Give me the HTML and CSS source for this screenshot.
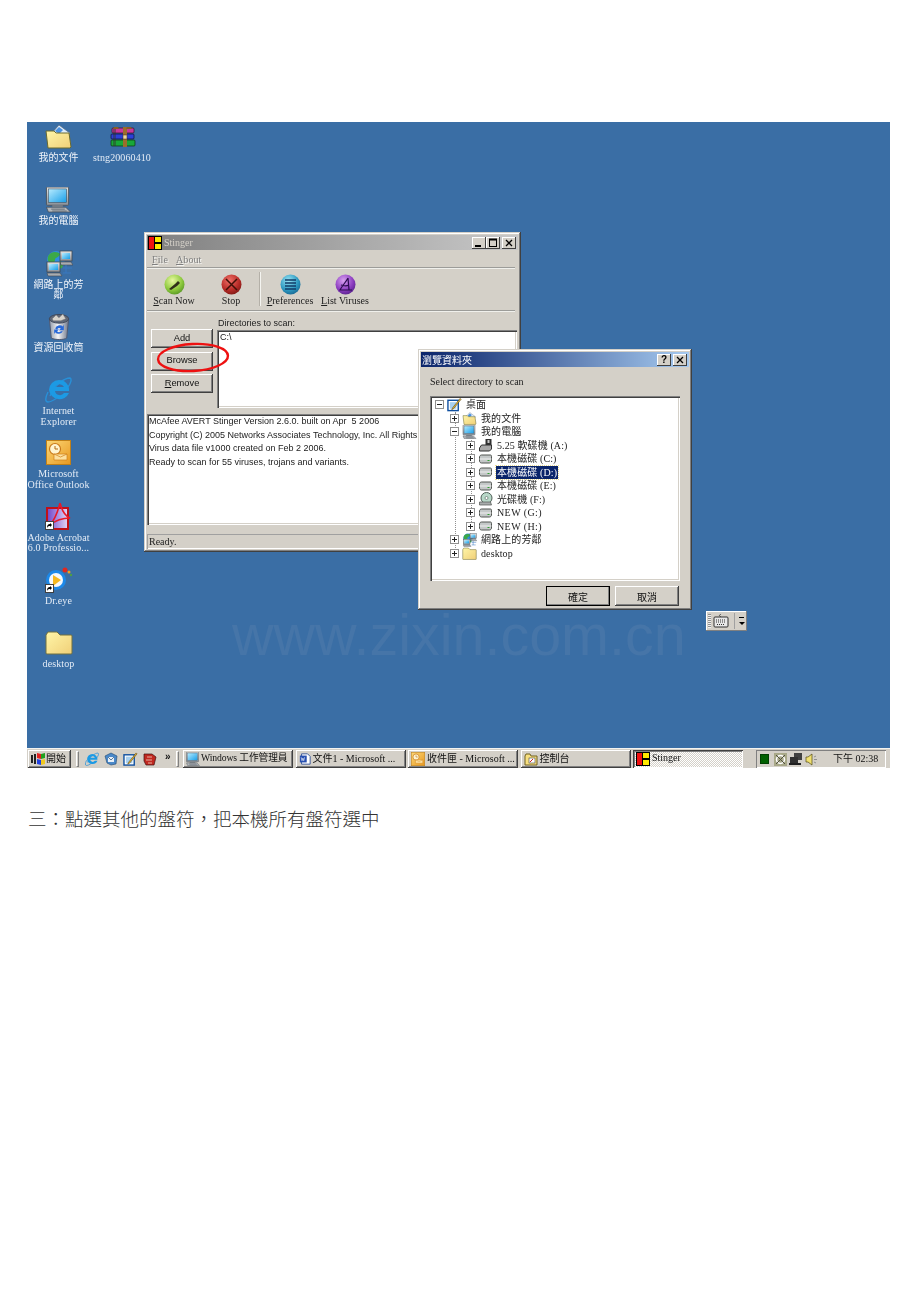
FILE: index.html
```html
<!DOCTYPE html>
<html lang="zh-Hant">
<head>
    <meta charset="UTF-8">
    <title>Stinger</title>
    <link rel="stylesheet" href="styles.css">
</head>
<body>
    <svg class="sprites" aria-hidden="true">
        <defs>
            <linearGradient id="folderFill" x1="0" y1="0" x2="1" y2="1"><stop offset="0" stop-color="#fff6a8"/><stop offset="1" stop-color="#f0cf78"/></linearGradient>
            <linearGradient id="screenFill" x1="0" y1="0" x2="1" y2="1"><stop offset="0" stop-color="#b8ecff"/><stop offset="1" stop-color="#189ee8"/></linearGradient>
            <linearGradient id="caseFill" x1="0" y1="0" x2="0" y2="1"><stop offset="0" stop-color="#e6e6e6"/><stop offset="1" stop-color="#8a8f96"/></linearGradient>
            <linearGradient id="binFill" x1="0" y1="0" x2="1" y2="0"><stop offset="0" stop-color="#8f98a8"/><stop offset=".45" stop-color="#f4f4f6"/><stop offset="1" stop-color="#6d7588"/></linearGradient>
            <linearGradient id="acroFill" x1="0" y1="0" x2="1" y2="0"><stop offset="0" stop-color="#6f43c8"/><stop offset="1" stop-color="#e4d8f8"/></linearGradient>
            <linearGradient id="outFill" x1="0" y1="0" x2="1" y2="1"><stop offset="0" stop-color="#fcd878"/><stop offset="1" stop-color="#e89820"/></linearGradient>
            <radialGradient id="orbGreen" cx=".4" cy=".3" r=".8"><stop offset="0" stop-color="#e8f8a0"/><stop offset=".6" stop-color="#8cc83c"/><stop offset="1" stop-color="#4c8c20"/></radialGradient>
            <radialGradient id="orbRed" cx=".4" cy=".3" r=".8"><stop offset="0" stop-color="#f07068"/><stop offset=".6" stop-color="#b82c28"/><stop offset="1" stop-color="#701410"/></radialGradient>
            <radialGradient id="orbBlue" cx=".4" cy=".3" r=".8"><stop offset="0" stop-color="#98e4f4"/><stop offset=".6" stop-color="#2c98c0"/><stop offset="1" stop-color="#145c88"/></radialGradient>
            <radialGradient id="orbPurple" cx=".4" cy=".3" r=".8"><stop offset="0" stop-color="#d8a0f0"/><stop offset=".6" stop-color="#8c3cc0"/><stop offset="1" stop-color="#4c1c80"/></radialGradient>

            <symbol id="i-docs" viewBox="0 0 27 25">
                <path d="M7 9 14 1l8 6 3 2-2 3H9z" fill="#dfeefc" stroke="#5a6a80" stroke-width=".7"/>
                <path d="m14 3 4 3-4 4-4-3z" fill="#4a90e0"/>
                <path d="M1 7h8l2 2h13l2 14-1 1H3z" fill="url(#folderFill)" stroke="#6a6a30"/>
            </symbol>
            <symbol id="i-rar" viewBox="0 0 27 20">
                <rect x="3" y="1" width="22" height="5" rx="1" fill="#c8389c" stroke="#301028" stroke-width=".7"/>
                <rect x="2" y="7" width="23" height="5" rx="1" fill="#2c40d8" stroke="#101030" stroke-width=".7"/>
                <rect x="2" y="13" width="24" height="6" rx="1" fill="#18a838" stroke="#103010" stroke-width=".7"/>
                <path d="M4 2h3v17H4z" fill="#303030" opacity=".45"/>
                <rect x="14" y="0" width="4" height="20" fill="#9c6c2c"/>
                <path d="M5 0h4l1 2H4zM22 0h-4l-1 2h6z" fill="#8c5c24"/>
                <rect x="14" y="8" width="4" height="4" fill="#e8d8a0" stroke="#402810" stroke-width=".5"/>
            </symbol>
            <symbol id="i-pc" viewBox="0 0 27 27">
                <rect x="1" y="0" width="23" height="19" rx="1" fill="url(#caseFill)" stroke="#505860"/>
                <rect x="3" y="2" width="19" height="14" fill="url(#screenFill)" stroke="#405060" stroke-width=".6"/>
                <path d="M7 19h11v2H7z" fill="#808890"/>
                <path d="M1 21h20l5 5H3z" fill="#b4b8bc" stroke="#485058" stroke-width=".8"/>
                <path d="M6 23h14M7 25h15" stroke="#606870"/>
            </symbol>
            <symbol id="i-net" viewBox="0 0 28 27">
                <circle cx="11" cy="10" r="9" fill="#2e8ce0"/>
                <path d="M6 3c3-2 8-1 9 1-1 4-5 3-5 6s-4 4-7 1c-1-3 0-6 3-8zM15 11l4 2-2 5-3 1z" fill="#3ca848"/>
                <rect x="15" y="1" width="12" height="10" fill="url(#caseFill)" stroke="#404850" stroke-width=".8"/>
                <rect x="17" y="3" width="8" height="6" fill="url(#screenFill)"/>
                <path d="M15 12h11l2 3H16z" fill="#a8acb0" stroke="#404850" stroke-width=".6"/>
                <rect x="2" y="12" width="13" height="10" fill="url(#caseFill)" stroke="#404850" stroke-width=".8"/>
                <rect x="4" y="14" width="9" height="6" fill="url(#screenFill)"/>
                <path d="M2 23h13l2 3H3z" fill="#a8acb0" stroke="#404850" stroke-width=".6"/>
                <path d="M18 18h9M21 15v8M18 23h8" stroke="#3878c0"/>
            </symbol>
            <symbol id="i-bin" viewBox="0 0 24 28">
                <path d="M2 6l2 20c4 2 13 2 16 0l2-20z" fill="url(#binFill)" stroke="#505870"/>
                <ellipse cx="12" cy="6" rx="10" ry="4.500" fill="#606878" stroke="#404858"/>
                <path d="M5 6l4-4 3 3 4-4 3 5-5 2-8 0z" fill="#d8d4cc" stroke="#707070" stroke-width=".5"/>
                <path d="M8 16a5 5 0 0 1 8-2l1-2v6h-5l2-2a3 3 0 0 0-4 1zM16 19a5 5 0 0 1-8 1l-1 2v-5h5l-2 2a3 3 0 0 0 4 0z" fill="#2868d8"/>
            </symbol>
            <symbol id="i-ie" viewBox="0 0 27 27">
                <path d="M5 20C10 8 20 2 25 2c2 1 1 5-2 9" fill="none" stroke="#2890d8" stroke-width="1.400"/>
                <path d="M14 4a10 10 0 0 1 10 11H10a5 5 0 0 0 9 2h5a10.500 10.500 0 0 1-20-3A10 10 0 0 1 14 4zm-4 7h9a5 5 0 0 0-9 0z" fill="#1c9ae4" fill-rule="evenodd"/>
                <path d="M3 16c-3 6-3 10 0 10 3 0 6-2 9-4" fill="none" stroke="#2890d8" stroke-width="1.400"/>
            </symbol>
            <symbol id="i-outlook" viewBox="0 0 25 25">
                <rect x=".5" y=".5" width="24" height="24" fill="url(#outFill)" stroke="#c08018"/>
                <circle cx="9" cy="9" r="5.500" fill="#fff4d0" stroke="#c87818" stroke-width="1.200"/>
                <path d="M9 6v3h3" fill="none" stroke="#b06810"/>
                <path d="M8 14h13v6H8z" fill="#fce0a0" stroke="#d08018" stroke-width=".7"/>
                <path d="M8 14l6.500 3 6.500-3" fill="none" stroke="#d08018" stroke-width=".7"/>
            </symbol>
            <symbol id="i-acro" viewBox="0 0 27 27">
                <rect x="2" y="5" width="21" height="21" fill="url(#acroFill)" stroke="#c01018" stroke-width="2"/>
                <path d="M15 0c-2 8-4 15-10 22 6-5 12-7 20-7-5-2-8-7-10-15z" fill="none" stroke="#e81828" stroke-width="1.600"/>
            </symbol>
            <symbol id="i-dreye" viewBox="0 0 28 25">
                <circle cx="11" cy="13" r="10" fill="#1c88e8"/>
                <circle cx="11" cy="13" r="7" fill="#f4f8fc"/>
                <path d="M8 8l8 5-8 6z" fill="#f4b820"/>
                <circle cx="20" cy="3" r="2.500" fill="#e02820"/>
                <circle cx="24" cy="5" r="1.500" fill="#f0a020"/>
                <circle cx="26" cy="8" r="1.200" fill="#50a040"/>
            </symbol>
            <symbol id="i-folder" viewBox="0 0 28 25">
                <path d="M1 5l2-3h9l3 3h11a1 1 0 0 1 1 1v17a1 1 0 0 1-1 1H2a1 1 0 0 1-1-1z" fill="url(#folderFill)" stroke="#707040"/>
            </symbol>
            <symbol id="i-link" viewBox="0 0 9 9">
                <rect x=".5" y=".5" width="8" height="8" fill="#fff" stroke="#404040"/>
                <path d="M2 7c0-3 1-4 3-4V2l2 2-2 2V5C4 5 3 5 2 7z" fill="#000"/>
            </symbol>
            <symbol id="i-stinger" viewBox="0 0 14 14">
                <rect width="14" height="14" fill="#000"/>
                <rect x="1" y="1" width="5" height="12" fill="#f01010"/>
                <rect x="7" y="1" width="6" height="5" fill="#ffe800"/>
                <rect x="7" y="8" width="6" height="5" fill="#ffe800"/>
            </symbol>
            <symbol id="i-disk" viewBox="0 0 14 10">
                <path d="M1 3c0-1 1-2 2-2h9c1 0 1 1 1 2v4c0 1-1 2-2 2H3C2 9 1 8 1 7z" fill="#c4c8c8" stroke="#505450"/>
                <path d="M1 5h12" stroke="#f0f0f0"/>
                <rect x="9" y="6" width="2" height="1" fill="#30a030"/>
            </symbol>
            <symbol id="i-floppy" viewBox="0 0 14 13">
                <rect x="7" y="0" width="6" height="8" fill="#303030"/>
                <rect x="9" y="1" width="2" height="3" fill="#c8c8c8"/>
                <path d="M3 6h10v4l-2 2H1v-3z" fill="#a8a8a8" stroke="#303030"/>
            </symbol>
            <symbol id="i-cd" viewBox="0 0 14 14">
                <circle cx="8" cy="6" r="5.500" fill="#b8d8c8" stroke="#506058"/>
                <circle cx="8" cy="6" r="1.500" fill="#fff" stroke="#506058" stroke-width=".6"/>
                <path d="M1 10h11l1 3H1z" fill="#a8acac" stroke="#505450" stroke-width=".7"/>
            </symbol>
            <symbol id="i-desk" viewBox="0 0 16 15">
                <rect x="1" y="3" width="11" height="11" fill="#fff" stroke="#1050a0" stroke-width="1.500"/>
                <rect x="3" y="5" width="7" height="7" fill="#a8d0f0"/>
                <path d="M6 11l8-10 1 1-8 10-2 1z" fill="#f0b830" stroke="#504010" stroke-width=".6"/>
            </symbol>
            <symbol id="i-flag" viewBox="0 0 16 14">
                <path d="M1 3h2v8H1zM4 2h2v10H4z" fill="#202020"/>
                <path d="M7 1l4 1v5L7 6z" fill="#e02020"/>
                <path d="M11 2l4-1v5l-4 1z" fill="#20a020"/>
                <path d="M7 7l4 1v5l-4-1z" fill="#2040e0"/>
                <path d="M11 8l4-1v5l-4 1z" fill="#f0c820"/>
            </symbol>
            <symbol id="i-word" viewBox="0 0 14 14">
                <path d="M3 1h7l3 3v9H3z" fill="#fff" stroke="#284890"/>
                <rect x="1" y="3" width="8" height="8" fill="#2850b0"/>
                <path d="M2.500 5l1 4 1-3 1 3 1-4" fill="none" stroke="#fff" stroke-width=".7"/>
            </symbol>
            <symbol id="i-panel" viewBox="0 0 14 13">
                <path d="M1 3l1-2h4l1 2h6v9H1z" fill="#f8e080" stroke="#706020"/>
                <rect x="5" y="5" width="6" height="5" fill="#fff" stroke="#404040" stroke-width=".6"/>
                <path d="M6 9l3-3" stroke="#d02020"/>
            </symbol>
            <symbol id="i-mail" viewBox="0 0 14 14">
                <path d="M1 4l6-3 6 3-1 8-5 1-4-2z" fill="#4a88c8" stroke="#204870" stroke-width=".6"/>
                <path d="M4 5h6v5H4z" fill="#e8f0f8"/>
                <path d="M4 5l3 3 3-3" fill="none" stroke="#204870" stroke-width=".7"/>
            </symbol>
            <symbol id="i-dragon" viewBox="0 0 14 14">
                <path d="M1 2h8l4 3-2 8H3L1 9z" fill="#c02820" stroke="#401010" stroke-width=".7"/>
                <path d="M4 5h5M3 8h6M5 11h4" stroke="#f0d0c0" stroke-width=".8"/>
            </symbol>
            <symbol id="i-min" viewBox="0 0 10 10"><path d="M1 8h6" stroke="#000" stroke-width="2"/></symbol>
            <symbol id="i-max" viewBox="0 0 10 10"><path d="M1 1.500h8" stroke="#000" stroke-width="2"/><rect x="1.500" y="1.500" width="7" height="7" fill="none" stroke="#000"/></symbol>
            <symbol id="i-close" viewBox="0 0 10 10"><path d="M2 2l6 6M8 2 2 8" stroke="#000" stroke-width="1.300"/></symbol>
        </defs>
    </svg>

    <div class="desktop">
        <div class="watermark">www.zixin.com.cn</div>

        <div class="icon-grid">
            <div class="desk-icon"><div class="glyph"><svg width="27" height="25"><use href="#i-docs"/></svg></div><span>我的文件</span></div>
            <div class="desk-icon"><div class="glyph"><svg width="27" height="26"><use href="#i-pc"/></svg></div><span>我的電腦</span></div>
            <div class="desk-icon"><div class="glyph"><svg width="28" height="27"><use href="#i-net"/></svg></div><span>網路上的芳<br>鄰</span></div>
            <div class="desk-icon"><div class="glyph"><svg width="24" height="27"><use href="#i-bin"/></svg></div><span>資源回收筒</span></div>
            <div class="desk-icon"><div class="glyph"><svg width="27" height="27"><use href="#i-ie"/></svg></div><span class="latin">Internet<br>Explorer</span></div>
            <div class="desk-icon"><div class="glyph"><svg width="25" height="25"><use href="#i-outlook"/></svg></div><span class="latin">Microsoft<br>Office Outlook</span></div>
            <div class="desk-icon"><div class="glyph"><svg width="27" height="27"><use href="#i-acro"/></svg><svg class="shortcut" width="9" height="9"><use href="#i-link"/></svg></div><span class="latin">Adobe Acrobat<br>6.0 Professio...</span></div>
            <div class="desk-icon"><div class="glyph"><svg width="28" height="25"><use href="#i-dreye"/></svg><svg class="shortcut" width="9" height="9"><use href="#i-link"/></svg></div><span class="latin">Dr.eye</span></div>
            <div class="desk-icon"><div class="glyph"><svg width="28" height="25"><use href="#i-folder"/></svg></div><span class="latin">desktop</span></div>
            <div class="desk-icon second-col"><div class="glyph"><svg width="27" height="20"><use href="#i-rar"/></svg></div><span class="latin">stng20060410</span></div>
        </div>

        <div class="window stinger">
            <div class="titlebar inactive">
                <svg width="14" height="14"><use href="#i-stinger"/></svg>
                <span class="title-text">Stinger</span>
                <div class="caption-btns">
                    <button class="cap"><svg width="10" height="10"><use href="#i-min"/></svg></button><button class="cap"><svg width="10" height="10"><use href="#i-max"/></svg></button><button class="cap gap"><svg width="10" height="10"><use href="#i-close"/></svg></button>
                </div>
            </div>
            <div class="menu"><span><u>F</u>ile</span><span><u>A</u>bout</span></div>
            <div class="toolbar">
                <div class="tool scan"><svg width="21" height="21" viewBox="0 0 21 21"><circle cx="10.500" cy="10.500" r="10" fill="url(#orbGreen)"/><path d="M5 15l6-5 3-3 2 2-3 3-6 4z" fill="#303018"/></svg><span><u>S</u>can Now</span></div>
                <div class="tool stop"><svg width="21" height="21" viewBox="0 0 21 21"><circle cx="10.500" cy="10.500" r="10" fill="url(#orbRed)"/><path d="M5 5l11 11M16 5 5 16" stroke="#401008" stroke-width="1.500"/></svg><span>Stop</span></div>
                <div class="tool-sep"></div>
                <div class="tool prefs"><svg width="21" height="21" viewBox="0 0 21 21"><circle cx="10.500" cy="10.500" r="10" fill="url(#orbBlue)"/><path d="M5 6h11M5 9h11M5 12h11M5 15h11" stroke="#103c68" stroke-width="1.500"/></svg><span><u>P</u>references</span></div>
                <div class="tool lists"><svg width="21" height="21" viewBox="0 0 21 21"><circle cx="10.500" cy="10.500" r="10" fill="url(#orbPurple)"/><path d="M13 4c-2 4-6 8-8 12h12M13 4l1 12M6 11c3 1 6 1 8 0" fill="none" stroke="#2c0c50" stroke-width="1.200"/></svg><span><u>L</u>ist Viruses</span></div>
            </div>
            <div class="scan-panel">
                <div class="side-btns">
                    <button class="btn">Add</button>
                    <button class="btn">Browse</button>
                    <button class="btn"><u>R</u>emove</button>
                </div>
                <div class="dir-col">
                    <label class="dir-label">Directories to scan:</label>
                    <div class="dir-list sunken">C:\</div>
                </div>
            </div>
            <div class="log sunken">
                <div>McAfee AVERT Stinger Version 2.6.0. built on Apr&nbsp; 5 2006</div>
                <div>Copyright (C) 2005 Networks Associates Technology, Inc. All Rights</div>
                <div>Virus data file v1000 created on Feb 2 2006.</div>
                <div>Ready to scan for 55 viruses, trojans and variants.</div>
            </div>
            <div class="statusbar">Ready.</div>
            <svg class="red-ring" width="76" height="33" viewBox="0 0 76 33"><ellipse cx="38" cy="16.500" rx="35" ry="13.500" fill="none" stroke="#ee1111" stroke-width="2.400" transform="rotate(-3 38 16.500)"/></svg>
        </div>

        <div class="window browse">
            <div class="titlebar active">
                <span class="title-text">瀏覽資料夾</span>
                <div class="caption-btns">
                    <button class="cap help">?</button><button class="cap gap"><svg width="10" height="10"><use href="#i-close"/></svg></button>
                </div>
            </div>
            <div class="prompt">Select directory to scan</div>
            <div class="tree sunken">
                <i class="vline v1"></i><i class="vline v2"></i>
                <div class="row"><b class="exp"></b><svg width="16" height="15"><use href="#i-desk"/></svg><span>桌面</span></div>
                <div class="row l1"><b class="exp plus"></b><svg width="15" height="13"><use href="#i-docs"/></svg><span>我的文件</span></div>
                <div class="row l1"><b class="exp"></b><svg width="15" height="14"><use href="#i-pc"/></svg><span>我的電腦</span></div>
                <div class="row l2"><b class="exp plus"></b><svg width="14" height="13"><use href="#i-floppy"/></svg><span>5.25 軟碟機 (A:)</span></div>
                <div class="row l2"><b class="exp plus"></b><svg width="14" height="10"><use href="#i-disk"/></svg><span>本機磁碟 (C:)</span></div>
                <div class="row l2"><b class="exp plus"></b><svg width="14" height="10"><use href="#i-disk"/></svg><span class="selected">本機磁碟 (D:)</span></div>
                <div class="row l2"><b class="exp plus"></b><svg width="14" height="10"><use href="#i-disk"/></svg><span>本機磁碟 (E:)</span></div>
                <div class="row l2"><b class="exp plus"></b><svg width="14" height="14"><use href="#i-cd"/></svg><span>光碟機 (F:)</span></div>
                <div class="row l2"><b class="exp plus"></b><svg width="14" height="10"><use href="#i-disk"/></svg><span class="wide">NEW (G:)</span></div>
                <div class="row l2"><b class="exp plus"></b><svg width="14" height="10"><use href="#i-disk"/></svg><span class="wide">NEW (H:)</span></div>
                <div class="row l1"><b class="exp plus"></b><svg width="15" height="14"><use href="#i-net"/></svg><span>網路上的芳鄰</span></div>
                <div class="row l1"><b class="exp plus"></b><svg width="15" height="13"><use href="#i-folder"/></svg><span>desktop</span></div>
            </div>
            <div class="dialog-btns">
                <button class="btn default">確定</button>
                <button class="btn">取消</button>
            </div>
        </div>

        <div class="ime">
            <div class="ime-grip"></div>
            <svg width="16" height="14" viewBox="0 0 16 14"><path d="M8 0c-2 1-2 2 0 3" fill="none" stroke="#404040"/><rect x="1" y="3" width="14" height="10" rx="1" fill="#e8e8e8" stroke="#303030"/><path d="M3 6h10M3 8h10M4 10.500h8" stroke="#303030" stroke-dasharray="1 1"/></svg>
            <div class="ime-arrows"><i class="dash"></i><i class="down"></i></div>
        </div>

        <div class="taskbar">
            <button class="task start"><svg width="16" height="14"><use href="#i-flag"/></svg><span>開始</span></button>
            <i class="grip"></i>
            <div class="quick">
                <svg width="14" height="14"><use href="#i-ie"/></svg>
                <svg width="14" height="14"><use href="#i-mail"/></svg>
                <svg width="15" height="14"><use href="#i-desk"/></svg>
                <svg width="14" height="14"><use href="#i-dragon"/></svg>
                <span class="more">&raquo;</span>
            </div>
            <i class="grip"></i>
            <button class="task first"><svg width="14" height="14"><use href="#i-pc"/></svg><span>Windows 工作管理員</span></button>
            <button class="task"><svg width="12" height="14"><use href="#i-word"/></svg><span>文件1 - Microsoft ...</span></button>
            <button class="task"><svg width="14" height="14"><use href="#i-outlook"/></svg><span>收件匣 - Microsoft ...</span></button>
            <button class="task"><svg width="14" height="13"><use href="#i-panel"/></svg><span>控制台</span></button>
            <button class="task pressed"><svg width="14" height="14"><use href="#i-stinger"/></svg><span>Stinger</span></button>
            <div class="tray">
                <i class="tray-green"></i>
                <svg width="13" height="13" viewBox="0 0 13 13"><rect width="13" height="13" fill="#a8a888"/><circle cx="6.500" cy="6.500" r="4" fill="none" stroke="#fff" stroke-width="1.500"/><path d="M2 2l9 9M11 2l-9 9" stroke="#505040"/></svg>
                <svg width="14" height="13" viewBox="0 0 14 13"><rect x="5" y="0" width="8" height="7" fill="#404040"/><rect x="1" y="4" width="8" height="6" fill="#303030"/><path d="M0 11h12" stroke="#202020" stroke-width="2"/></svg>
                <svg width="13" height="13" viewBox="0 0 13 13"><path d="M1 4h2l4-3v11L3 9H1z" fill="#f0e070" stroke="#504810" stroke-width=".7"/><path d="M9 4l2-1M9 6.500h3M9 9l2 1" stroke="#909090"/></svg>
                <span class="clock">下午 02:38</span>
            </div>
        </div>
    </div>

    <p class="caption">三<span class="punct">：</span>點選其他的盤符<span class="punct">，</span>把本機所有盤符選中</p>
</body>
</html>
```

FILE: styles.css
```css
* {
    box-sizing: border-box;
}
body {
    margin: 0;
    padding: 122px 0 0 27px;
    background: #fff;
    font-family: "Liberation Serif", "Noto Sans CJK TC", serif;
}
.sprites {
    position: absolute;
    width: 0;
    height: 0;
}
button {
    font: inherit;
    color: inherit;
    border: none;
    padding: 0;
    background: #d4d0c8;
}

/* desktop */
.desktop {
    position: relative;
    width: 863px;
    height: 646px;
    background: #3a6ea5;
    display: flex;
    flex-direction: column;
    justify-content: flex-end;
    overflow: hidden;
    /* the source is a scaled-down capture */
    filter: blur(.4px);
}
.watermark {
    position: absolute;
    left: 205px;
    top: 480px;
    font: 57.500px "Liberation Sans", sans-serif;
    color: #4675a8;
    white-space: nowrap;
}
.icon-grid {
    position: absolute;
    left: 0;
    top: 0;
    display: grid;
    grid-auto-flow: column;
    grid-template-rows: repeat(9, 63.3px);
    grid-template-columns: 63px 64px;
}
.desk-icon {
    display: flex;
    flex-direction: column;
    align-items: center;
    color: #fff;
    font-size: 10px;
    line-height: 10.500px;
    text-align: center;
}
.desk-icon .glyph {
    position: relative;
    height: 29px;
    display: flex;
    align-items: center;
    justify-content: center;
}
.desk-icon span {
    margin-top: 2px;
    white-space: nowrap;
    color: #f0f4fa;
}
.desk-icon .latin {
    letter-spacing: .1px;
    color: #e4ecf6;
}
.second-col {
    grid-row: 1;
    grid-column: 2;
}
.shortcut {
    position: absolute;
    left: 0;
    bottom: 1px;
}

/* window chrome */
.window {
    position: absolute;
    background: #d4d0c8;
    padding: 3px;
    box-shadow: inset -1px -1px #404040, inset 1px 1px #d4d0c8, inset -2px -2px #808080, inset 2px 2px #fff;
}
.stinger {
    left: 117px;
    top: 110px;
    width: 377px;
    height: 320px;
    display: flex;
    flex-direction: column;
    font-family: "Liberation Sans", "Noto Sans CJK TC", sans-serif;
}
.browse {
    left: 391px;
    top: 227px;
    width: 274px;
    height: 261px;
}
.titlebar {
    height: 15px;
    display: flex;
    align-items: center;
    gap: 2px;
    padding: 0 2px 0 1px;
    font-family: "Liberation Serif", "Noto Sans CJK TC", serif;
    font-size: 10px;
    color: #d4d0c8;
}
.titlebar.inactive {
    background: linear-gradient(90deg, #808080, #c8c8c8);
}
.titlebar.active {
    background: linear-gradient(90deg, #0a246a, #a6caf0);
    color: #fff;
    padding-left: 1px;
}
.caption-btns {
    margin-left: auto;
    display: flex;
}
.cap {
    width: 14px;
    height: 12px;
    display: flex;
    align-items: center;
    justify-content: center;
    font: bold 10px/10px "Liberation Sans", sans-serif;
    color: #000;
    box-shadow: inset -1px -1px #404040, inset 1px 1px #fff;
}
.cap.gap {
    margin-left: 2px;
}
.btn {
    height: 19px;
    padding-bottom: 2px;
    font-size: 9.300px;
    color: #111;
    box-shadow: inset -1px -1px #404040, inset 1px 1px #fff, inset -2px -2px #808080;
}
.btn.default {
    outline: 1px solid #000;
    outline-offset: -1px;
}
.sunken {
    background: #fff;
    box-shadow: inset 1px 1px #808080, inset 2px 2px #404040, inset -1px -1px #fff, inset -2px -2px #d4d0c8;
}

/* stinger window */
.menu {
    width: 368px;
    height: 18px;
    margin-top: 1px;
    display: flex;
    align-items: center;
    gap: 8px;
    padding-left: 5px;
    font: 10px "Liberation Serif", serif;
    color: #808080;
    text-shadow: 1px 1px 0 #f4f4f0;
    letter-spacing: .1px;
    border-bottom: 2px groove #f0f0ec;
}
.toolbar {
    position: relative;
    width: 368px;
    height: 43px;
    border-bottom: 2px groove #f0f0ec;
}
.tool {
    position: absolute;
    top: 5px;
    width: 70px;
    display: flex;
    flex-direction: column;
    align-items: center;
    gap: 0;
    font: 10px/12px "Liberation Serif", serif;
    color: #222;
}
.tool.scan {
    left: -8px;
}
.tool.stop {
    left: 49px;
}
.tool.prefs {
    left: 108px;
}
.tool.lists {
    left: 163px;
}
.tool-sep {
    position: absolute;
    left: 112px;
    top: 3px;
    width: 2px;
    height: 34px;
    background: #b4b0a8;
    border-right: 1px solid #f4f4f0;
}
.scan-panel {
    height: 102px;
    display: flex;
    gap: 4px;
    padding-left: 4px;
}
.side-btns {
    width: 62px;
    padding-top: 17px;
    display: flex;
    flex-direction: column;
    gap: 3.500px;
}
.dir-col {
    width: 300px;
}
.dir-label {
    display: block;
    height: 18px;
    padding: 6px 0 0 1px;
    font-size: 9px;
    line-height: 11px;
    color: #222;
}
.dir-list {
    height: 78px;
    padding: 2px 3px;
    font-size: 9px;
    line-height: 11px;
    color: #222;
}
.log {
    height: 111px;
    width: 370px;
    padding: 1px 2px 0;
    font-size: 9px;
    line-height: 13.500px;
    color: #222;
}
.statusbar {
    height: 15px;
    margin-top: 9px;
    padding-left: 2px;
    font: 10px/15px "Liberation Serif", serif;
    color: #222;
    box-shadow: inset 1px 1px #a0a0a0, inset -1px -1px #fff;
}
.red-ring {
    position: absolute;
    left: 11px;
    top: 109px;
}

/* browse dialog */
.prompt {
    padding: 9px 0 0 9px;
    height: 29px;
    font-size: 10px;
    line-height: 12px;
    color: #222;
}
.tree {
    position: relative;
    width: 250px;
    height: 185px;
    margin-left: 9px;
    padding: 2px 0 0 5px;
    font-size: 10px;
    color: #222;
}
.vline {
    position: absolute;
    border-left: 1px dotted #909090;
}
.vline.v1 {
    left: 25px;
    top: 16px;
    height: 142px;
}
.vline.v2 {
    left: 41px;
    top: 44px;
    height: 86px;
}
.row {
    position: relative;
    height: 13.500px;
    display: flex;
    align-items: center;
    white-space: nowrap;
}
.row.l1 {
    padding-left: 15px;
}
.row.l2 {
    padding-left: 31px;
}
.row svg {
    width: 15px;
    flex: none;
    margin: 0 3px;
}
.row span {
    padding: 0 1px;
    letter-spacing: .1px;
    line-height: 13px;
}
.row .wide {
    letter-spacing: .4px;
}
.row .selected {
    background: #0a246a;
    color: #fff;
    outline: 1px dotted #e8d890;
}
.exp {
    position: relative;
    flex: none;
    width: 9px;
    height: 9px;
    border: 1px solid #909090;
    background: #fff;
}
.exp::before {
    content: "";
    position: absolute;
    left: 1px;
    top: 3px;
    width: 5px;
    height: 1px;
    background: #222;
}
.exp.plus::after {
    content: "";
    position: absolute;
    left: 3px;
    top: 1px;
    width: 1px;
    height: 5px;
    background: #222;
}
.dialog-btns {
    display: flex;
    justify-content: flex-end;
    gap: 5px;
    padding: 5px 10px 0 0;
}
.dialog-btns .btn {
    width: 64px;
    height: 20px;
    padding-bottom: 0;
    font-size: 10px;
    font-family: "Noto Sans CJK TC", sans-serif;
}

/* floating language bar */
.ime {
    position: absolute;
    left: 679px;
    top: 489px;
    width: 41px;
    height: 20px;
    background: #d4d0c8;
    display: flex;
    align-items: center;
    gap: 2px;
    padding-left: 2px;
    box-shadow: inset -1px -1px #808080, inset 1px 1px #fff;
}
.ime-grip {
    width: 3px;
    height: 14px;
    background: repeating-linear-gradient(#909090 0 1px, #f0f0f0 1px 2px);
}
.ime-arrows {
    margin-left: 3px;
    padding-left: 4px;
    height: 16px;
    border-left: 1px solid #a0a0a0;
    display: flex;
    flex-direction: column;
    justify-content: center;
    gap: 4px;
}
.ime-arrows .dash {
    width: 5px;
    height: 1px;
    background: #000;
}
.ime-arrows .down {
    width: 0;
    height: 0;
    border: 3px solid transparent;
    border-top-color: #000;
    border-bottom: 0;
}

/* taskbar */
.taskbar {
    position: relative;
    height: 20px;
    background: #d4d0c8;
    border-top: 1px solid #f4f4f0;
    padding: 1px 0 0 1px;
    display: flex;
    align-items: flex-start;
    font-size: 10px;
    color: #111;
}
.task {
    width: 110px;
    height: 18px;
    margin-left: 2.500px;
    padding: 0 0 0 3px;
    display: flex;
    align-items: center;
    gap: 2px;
    white-space: nowrap;
    overflow: hidden;
    box-shadow: inset -1px -1px #404040, inset 1px 1px #fff, inset -2px -2px #808080;
}
.task span {
    margin-top: -4px;
}
.task.start {
    width: 43px;
    margin-left: 0;
    padding-left: 2px;
    gap: 0;
}
.task.first {
    margin-left: 4px;
    gap: 1px;
}
.task.first span {
    font-size: 9.700px;
    letter-spacing: -.1px;
}
.task.pressed {
    background: repeating-conic-gradient(#fff 0 25%, #d4d0c8 0 50%) 0 0 / 2px 2px;
    box-shadow: inset 1px 1px #404040, inset -1px -1px #fff, inset 2px 2px #808080;
}
.grip {
    width: 3px;
    height: 16px;
    margin: 1px 0 0 5px;
    border-left: 1px solid #fff;
    border-right: 1px solid #808080;
    border-top: 1px solid #fff;
    border-bottom: 1px solid #808080;
}
.quick {
    width: 92px;
    height: 18px;
    padding-left: 6px;
    display: flex;
    align-items: center;
    gap: 5px;
}
.more {
    font: bold 10px "Liberation Sans", sans-serif;
    margin: -6px 0 0 3px;
}
.tray {
    width: 130px;
    height: 18px;
    margin-left: 13px;
    padding-left: 4px;
    display: flex;
    align-items: center;
    gap: 2px;
    box-shadow: inset 1px 1px #808080, inset -1px -1px #fff;
}
.tray-green {
    width: 9px;
    height: 10px;
    margin: 0 3px 0 0;
    background: #006000;
    border: 1px solid #004000;
}
.clock {
    margin: -4px 0 0 13px;
}

/* text under the screenshot */
.caption {
    margin: 40px 0 0 1px;
    font: 300 18.500px/20px "Noto Sans CJK TC", sans-serif;
    color: #333;
}
.punct {
    font-family: "Noto Sans CJK SC", sans-serif;
}
```
